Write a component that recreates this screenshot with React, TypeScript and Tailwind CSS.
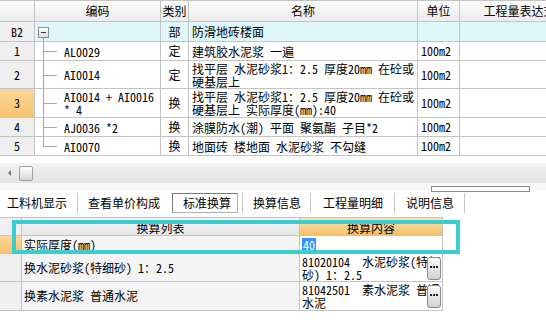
import React from "react";

type Row = {
  no: string;
  code: string[];
  kind: string;
  name: string[];
  unit: string;
  h: string;
  sel?: boolean;
  last?: boolean;
};

const rows: Row[] = [
  { no: "1", code: ["AL0029"], kind: "定", name: ["建筑胶水泥浆 一遍"], unit: "100m2", h: "h-[19px]" },
  { no: "2", code: ["AI0014"], kind: "定", name: ["找平层 水泥砂浆1：2.5 厚度20mm 在砼或", "硬基层上"], unit: "100m2", h: "h-[28px]" },
  { no: "3", code: ["AI0014 + AI0016", "* 4"], kind: "换", name: ["找平层 水泥砂浆1：2.5 厚度20mm 在砼或", "硬基层上 实际厚度(mm):40"], unit: "100m2", h: "h-[29px]", sel: true },
  { no: "4", code: ["AJ0036 *2"], kind: "换", name: ["涂膜防水(潮) 平面 聚氨酯 子目*2"], unit: "100m2", h: "h-[19px]" },
  { no: "5", code: ["AI0070"], kind: "换", name: ["地面砖 楼地面 水泥砂浆 不勾缝"], unit: "100m2", h: "h-[19px]", last: true },
];

const cell = "border-r border-b border-[#c4c4c4] shrink-0";

function Lines({ lines }: { lines: string[] }) {
  return (
    <div className="flex flex-col">
      {lines.map((l, i) => (
        <div key={i} className="leading-[13px] whitespace-pre">
          {l}
        </div>
      ))}
    </div>
  );
}

function TopTable() {
  return (
    <div className="flex flex-col">
      <div className="flex h-[22px] border-t border-[#c4c4c4] bg-gradient-to-b from-[#fbfbfb] to-[#ebebeb]">
        <div className={`${cell} w-[35px]`} />
        <div className={`${cell} w-[126px] flex items-center justify-center`}>编码</div>
        <div className={`${cell} w-[28px] flex items-center justify-center`}>类别</div>
        <div className={`${cell} w-[229px] flex items-center justify-center`}>名称</div>
        <div className={`${cell} w-[42px] flex items-center justify-center`}>单位</div>
        <div className={`${cell} w-[120px] flex items-center justify-center whitespace-nowrap`}>工程量表达式</div>
      </div>
      <div className="flex h-[20px]">
        <div className={`${cell} w-[35px] bg-[#efefef] flex items-center justify-center`}>B2</div>
        <div className={`${cell} w-[126px] bg-[#e0f7fa] relative`}>
          <div className="absolute left-[3px] top-[5px] w-[11px] h-[11px] border border-[#8e8e8e] bg-gradient-to-b from-white to-[#dcdcdc] flex items-center justify-center">
            <div className="w-[5px] h-px bg-[#333]" />
          </div>
          <div className="absolute left-[8px] top-[16px] bottom-0 w-px bg-[#a8a8a8]" />
        </div>
        <div className={`${cell} w-[28px] bg-[#e0f7fa] flex items-center justify-center`}>部</div>
        <div className={`${cell} w-[229px] bg-[#e0f7fa] flex items-center pl-[3px]`}>防滑地砖楼面</div>
        <div className={`${cell} w-[42px] bg-[#e0f7fa]`} />
        <div className={`${cell} w-[120px] bg-[#e0f7fa]`} />
      </div>
      {rows.map((r) => (
        <div key={r.no} className={`flex ${r.h}`}>
          <div
            className={`${cell} w-[35px] flex items-center justify-center ${
              r.sel ? "bg-gradient-to-b from-[#fcd898] to-[#f6c272]" : "bg-[#efefef]"
            }`}
          >
            {r.no}
          </div>
          <div className={`${cell} w-[126px] relative flex items-center pl-[29px]`}>
            <div className={`absolute left-[8px] top-0 w-px bg-[#a8a8a8] ${r.last ? "h-1/2" : "bottom-0"}`} />
            <div className="absolute left-[8px] top-1/2 w-[14px] h-px bg-[#a8a8a8]" />
            <Lines lines={r.code} />
          </div>
          <div className={`${cell} w-[28px] flex items-center justify-center`}>{r.kind}</div>
          <div className={`${cell} w-[229px] flex items-center pl-[3px]`}>
            <Lines lines={r.name} />
          </div>
          <div className={`${cell} w-[42px] flex items-center pl-[3px]`}>{r.unit}</div>
          <div className={`${cell} w-[120px]`} />
        </div>
      ))}
    </div>
  );
}

function HScroll() {
  return (
    <div className="h-[20px] flex items-center bg-gradient-to-b from-[#f3f3f3] to-[#e2e2e2]">
      <div className="w-[19px] flex justify-center">
        <div className="w-0 h-0 border-y-[3px] border-y-transparent border-r-[3px] border-r-[#777]" />
      </div>
      <div className="w-[14px] h-[15px] border border-[#a0a0a0] rounded-[2px] bg-gradient-to-b from-[#fdfdfd] to-[#d6d6d6]" />
    </div>
  );
}

function Sep({ ml }: { ml: string }) {
  return <div className={`w-px h-[20px] bg-[#c6c6c6] ${ml}`} />;
}

function Tabs() {
  return (
    <div className="h-[26px] flex items-start pt-[2px] bg-white text-[12px] whitespace-nowrap">
      <span className="ml-[7px] leading-[20px]">工料机显示</span>
      <Sep ml="ml-[10px]" />
      <span className="ml-[10px] leading-[20px]">查看单价构成</span>
      <div className="ml-[12px] h-[20px] w-[66px] border border-[#7a7a7a] border-r-[#b0b0b0] border-b-[#b0b0b0] bg-white flex items-center pl-[10px]">
        标准换算
      </div>
      <Sep ml="ml-[4px]" />
      <span className="ml-[10px] leading-[20px]">换算信息</span>
      <Sep ml="ml-[9px]" />
      <span className="ml-[12px] leading-[20px]">工程量明细</span>
      <Sep ml="ml-[11px]" />
      <span className="ml-[11px] leading-[20px]">说明信息</span>
      <Sep ml="ml-[10px]" />
    </div>
  );
}

function DotsBtn() {
  return (
    <div className="absolute right-[1px] top-[3px] w-[14px] h-[23px] border border-[#8a8a8a] rounded-[3px] bg-gradient-to-b from-[#fbfbfb] to-[#d2d2d2] flex items-start justify-center gap-px pt-[8px]">
      <div className="w-[2px] h-[2px] bg-[#222]" />
      <div className="w-[2px] h-[2px] bg-[#222]" />
      <div className="w-[2px] h-[2px] bg-[#222]" />
    </div>
  );
}

function BottomGrid() {
  const b = "border-r border-b border-[#c4c4c4] shrink-0";
  return (
    <div className="flex flex-col w-[443px] border-t border-[#c4c4c4]">
      <div className="flex h-[18px]">
        <div className={`${b} w-[22px] bg-[#efefef]`} />
        <div className={`${b} w-[278px] bg-gradient-to-b from-[#f6f6f6] to-[#e6e6e6] flex items-center justify-center pt-[3px]`}>换算列表</div>
        <div className={`${b} w-[143px] bg-gradient-to-b from-[#fde3b0] to-[#f4be68] flex items-center justify-center pt-[3px]`}>换算内容</div>
      </div>
      <div className="flex h-[18px]">
        <div className={`${b} w-[22px] bg-gradient-to-b from-[#fcd898] to-[#f6c272]`} />
        <div className={`${b} w-[278px] bg-[#f4f4f4] flex items-center pl-[2px]`}>实际厚度(mm)</div>
        <div className={`${b} w-[143px] bg-white flex items-center pl-[2px]`}>
          <span className="bg-[#3390ff] text-white leading-[13px] px-px">40</span>
        </div>
      </div>
      <div className="flex h-[28px]">
        <div className={`${b} w-[22px] bg-[#efefef]`} />
        <div className={`${b} w-[278px] bg-[#f4f4f4] flex items-center pl-[2px]`}>换水泥砂浆(特细砂) 1：2.5</div>
        <div className={`${b} w-[143px] bg-white relative flex items-center pl-[2px] overflow-hidden`}>
          <Lines lines={["81020104  水泥砂浆(特细", "砂) 1：2.5"]} />
          <DotsBtn />
        </div>
      </div>
      <div className="flex h-[29px]">
        <div className={`${b} w-[22px] bg-[#efefef]`} />
        <div className={`${b} w-[278px] bg-[#f4f4f4] flex items-center pl-[2px]`}>换素水泥浆 普通水泥</div>
        <div className={`${b} w-[143px] bg-white relative flex items-center pl-[2px] overflow-hidden`}>
          <Lines lines={["81042501  素水泥浆 普通", "水泥"]} />
          <DotsBtn />
        </div>
      </div>
    </div>
  );
}

export default function App() {
  return (
    <div className="font-['Noto_Sans_Mono_CJK_SC','Noto_Sans_CJK_SC',monospace] relative w-[546px] h-[334px] overflow-hidden bg-white text-[12px] text-black leading-none">
      <TopTable />
      <div className="h-[7px]" />
      <HScroll />
      <div className="h-[8px] flex items-start pt-[3px] pl-[431px] bg-[#f8f8f8]">
        <div className="w-[99px] h-[6px] border border-[#8c8c8c] bg-white" />
      </div>
      <Tabs />
      <BottomGrid />
      <div className="absolute left-[12px] top-[220px] w-[448px] h-[34px] border-[4px] border-[#3ccdd0] pointer-events-none" />
    </div>
  );
}
